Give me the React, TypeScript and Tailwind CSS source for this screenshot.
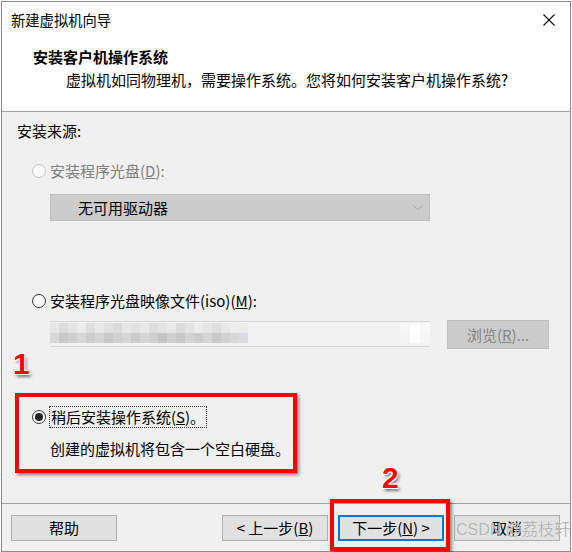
import React from "react";

const row1 = ["#e6e6e6","#dcdcdc","#e4e4e4","#ececec","#dedede","#e8e8e8","#e0e0e0","#dadada","#e6e6e6","#e2e2e2","#e8e8e8","#dddddd","#e4e4e4","#e9e9e9","#dcdcdc","#e3e3e3","#ececec","#e6e6e6","#dfdfdf","#e8e8e8","#eeeeee","#ebebeb"];
const row2 = ["#d8d8d8","#c9c9c9","#cfcfcf","#d6d6d6","#cdcdcd","#d3d3d3","#c7c7c7","#d0d0d0","#d6d6d6","#cbcbcb","#d4d4d4","#cfcfcf","#c5c5c5","#d0d0d0","#c8c8c8","#d2d2d2","#cccccc","#d5d5d5","#c9c9c9","#d1d1d1","#d7d7d7","#dadce2"];

function Radio({ checked, disabled }: { checked?: boolean; disabled?: boolean }) {
  return (
    <div
      className={
        "w-[14px] h-[14px] rounded-full border flex items-center justify-center shrink-0 " +
        (disabled ? "border-[#c4c4c4] bg-[#f8f8f8]" : "border-[#333333] bg-white")
      }
    >
      {checked && <div className="w-[8px] h-[8px] rounded-full bg-[#222222]" />}
    </div>
  );
}

function Btn({ children, primary }: { children: React.ReactNode; primary?: boolean }) {
  return (
    <div
      className={
        "w-[106px] h-[26px] flex items-center justify-center bg-[#e1e1e1] text-[15px] leading-[20px] text-black " +
        (primary ? "border-2 border-[#0078d7]" : "border border-[#adadad]")
      }
    >
      {children}
    </div>
  );
}

export default function App() {
  return (
    <div
      className="relative w-[572px] h-[552px] bg-white overflow-hidden pt-[1px] pl-[1px]"
      style={{ fontFamily: '"Noto Sans CJK SC", "Noto Sans", sans-serif' }}
    >
      <div className="w-[570px] h-[551px] border border-[#8c8c8c] flex flex-col">
        {/* title bar */}
        <div className="h-[36px] bg-white flex items-center justify-between pl-[9px] pr-[15px]">
          <span className="text-[14.3px] leading-[20px] text-black">新建虚拟机向导</span>
          <svg width="12" height="12" viewBox="0 0 12 12">
            <path d="M0.5 0.5 L11.5 11.5 M11.5 0.5 L0.5 11.5" stroke="#111" strokeWidth="1.1" />
          </svg>
        </div>
        {/* header */}
        <div className="h-[74px] bg-white border-b border-[#a0a0a0] pt-[9px]">
          <div className="pl-[31px] text-[15px] leading-[20px] font-bold text-black">安装客户机操作系统</div>
          <div className="pl-[64px] mt-[3px] text-[15px] leading-[20px] text-black">
            虚拟机如同物理机，需要操作系统。您将如何安装客户机操作系统?
          </div>
        </div>
        {/* body */}
        <div className="flex-1 bg-[#f0f0f0] pt-[9px] pl-[15px] text-[15px] leading-[20px] text-black">
          <div>安装来源:</div>
          <div className="mt-[20px] flex items-center gap-[4px] pl-[15px] text-[#7d7d7d]">
            <Radio disabled />
            <span>
              安装程序光盘(<span className="underline">D</span>):
            </span>
          </div>
          <div className="mt-[13px] ml-[33px] w-[380px] h-[27px] bg-[#cccccc] border border-[#bfbfbf] flex items-center justify-between pl-[27px] pr-[6px]">
            <span>无可用驱动器</span>
            <svg width="10" height="6" viewBox="0 0 10 6">
              <path d="M0.5 0.5 L5 5 L9.5 0.5" stroke="#a8a8a8" strokeWidth="1" fill="none" />
            </svg>
          </div>
          <div className="mt-[70px] flex items-center gap-[4px] pl-[15px]">
            <Radio />
            <span>
              安装程序光盘映像文件(iso)(<span className="underline">M</span>):
            </span>
          </div>
          <div className="mt-[10px] ml-[33px] flex items-start gap-[17px]">
            <div className="w-[380px] h-[26px] bg-[#f2f2f2] border-t border-b border-[#d6d6d6] flex flex-col pt-[1px]">
              <div className="flex h-[10px]">
                {row1.map((c, i) => (
                  <div key={i} className="w-[9px] h-full" style={{ backgroundColor: c }} />
                ))}
                <div className="flex-1" />
                <div className="w-[10px] h-full bg-[#f6f6f6]" />
                <div className="w-[10px] h-full bg-white" />
                <div className="w-[10px] h-full bg-[#f8f8f8]" />
              </div>
              <div className="flex h-[10px]">
                {row2.map((c, i) => (
                  <div key={i} className="w-[9px] h-full" style={{ backgroundColor: c }} />
                ))}
                <div className="flex-1" />
                <div className="w-[10px] h-full bg-[#f4f4f4]" />
                <div className="w-[10px] h-full bg-[#fbfbfb]" />
                <div className="w-[10px] h-full bg-[#f5f5f5]" />
              </div>
            </div>
            <div className="w-[102px] h-[29px] -mt-[1px] bg-[#cccccc] border border-[#bfbfbf] flex items-center justify-center text-[#838383]">
              浏览(<span className="underline">R</span>)...
            </div>
          </div>
          <div className="mt-[57px] flex items-center gap-[4px] pl-[15px]">
            <Radio checked />
            <span className="border border-dotted border-[#333] px-[1px] -ml-[1px]">
              稍后安装操作系统(<span className="underline">S</span>)。
            </span>
          </div>
          <div className="mt-[11px] pl-[33px]">创建的虚拟机将包含一个空白硬盘。</div>
        </div>
        {/* footer */}
        <div className="h-[48px] bg-[#f0f0f0] border-t border-[#a0a0a0] flex items-start pt-[11px] pl-[9px] pr-[10px]">
          <Btn>帮助</Btn>
          <div className="flex-1" />
          <div className="flex gap-[10px]">
            <Btn>
              &lt; 上一步(<span className="underline">B</span>)
            </Btn>
            <Btn primary>
              下一步(<span className="underline">N</span>) &gt;
            </Btn>
            <Btn>取消</Btn>
          </div>
        </div>
      </div>

      {/* annotations */}
      <div className="absolute left-[15px] top-[393px] w-[282px] h-[80px] border-[4px] border-[#ff0000] shadow-[2px_2px_3px_rgba(0,0,0,0.45)]" />
      <div className="absolute left-[330px] top-[499px] w-[120px] h-[52px] border-[4px] border-[#ff0000] shadow-[2px_2px_3px_rgba(0,0,0,0.45)]" />
      <div
        className="absolute left-[13px] top-[348px] text-[30px] leading-[32px] font-bold text-[#ff0000] [text-shadow:1px_1px_0_#fff,-1px_-1px_0_#fff,1px_-1px_0_#fff,-1px_1px_0_#fff,2px_3px_3px_rgba(0,0,0,0.5)]"
        style={{ fontFamily: '"Liberation Sans", Arial, sans-serif' }}
      >
        1
      </div>
      <div
        className="absolute left-[382px] top-[462px] text-[30px] leading-[32px] font-bold text-[#ff0000] [text-shadow:1px_1px_0_#fff,-1px_-1px_0_#fff,1px_-1px_0_#fff,-1px_1px_0_#fff,2px_3px_3px_rgba(0,0,0,0.5)]"
        style={{ fontFamily: '"Liberation Sans", Arial, sans-serif' }}
      >
        2
      </div>
      <div
        className="absolute left-[456px] top-[519px] whitespace-nowrap text-[16px] leading-[22px] text-[rgba(150,150,150,0.7)] [text-shadow:0_0_1px_rgba(255,255,255,0.9)]"
        style={{ fontFamily: '"Liberation Sans", "Noto Sans CJK SC", sans-serif' }}
      >
        CSDN @荔枝轩
      </div>
    </div>
  );
}
